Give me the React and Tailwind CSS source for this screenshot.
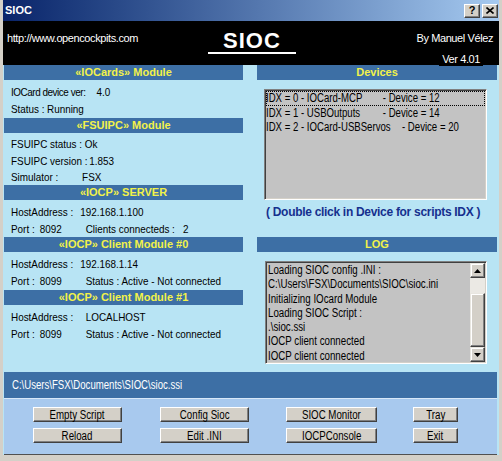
import React from "react";

function Header({ children }) {
  return (
    <div className="h-[15px] bg-[#3d6fa5] flex items-center justify-center text-[11px] font-bold text-[#f2f24a] leading-none">
      {children}
    </div>
  );
}

function Row({ label, lw, value, ew, extra }) {
  return (
    <div className="flex whitespace-nowrap origin-left scale-x-[0.9]">
      <span className={"shrink-0 " + (lw || "")}>{label}</span>
      <span className={"shrink-0 " + (ew || "")}>{value}</span>
      {extra ? <span className="shrink-0">{extra}</span> : null}
    </div>
  );
}

function WinBtn({ className, children }) {
  return (
    <div
      className={
        "h-[15px] bg-[#d4d0c8] border border-t-white border-l-white border-r-[#404040] border-b-[#404040] shadow-[inset_-1px_-1px_0_#808080] flex items-center justify-center text-[12px] leading-none text-black whitespace-nowrap " +
        className
      }
    >
      <span className="inline-block scale-x-[0.81]">{children}</span>
    </div>
  );
}

function Arrow({ up }) {
  return (
    <div className="h-[15px] w-[15px] shrink-0 bg-[#d4d0c8] border border-t-[#e8e6e0] border-l-[#e8e6e0] border-r-[#404040] border-b-[#404040] shadow-[inset_-1px_-1px_0_#808080,inset_1px_1px_0_#ffffff] flex items-center justify-center">
      <svg width="7" height="4" viewBox="0 0 7 4">
        {up ? <polygon points="3.5,0 7,4 0,4" fill="#000" /> : <polygon points="0,0 7,0 3.5,4" fill="#000" />}
      </svg>
    </div>
  );
}

function Line({ children }) {
  return <div className="origin-left scale-x-[0.81] whitespace-nowrap">{children}</div>;
}

export default function App() {
  return (
    <div className="w-[502px] h-[461px] bg-[#d4d0c8] px-[3px] flex flex-col font-['Liberation_Sans',Arial,sans-serif] overflow-hidden">
      {/* Title bar */}
      <div className="h-[21px] shrink-0 flex items-center justify-between pl-[2px] pr-[1px] bg-linear-to-r from-[#0a246a] to-[#a6caf0]">
        <span className="text-white font-bold text-[11px] leading-none">SIOC</span>
        <div className="flex gap-[2px]">
          <div className="w-[16px] h-[14px] bg-[#d4d0c8] border border-t-white border-l-white border-r-[#404040] border-b-[#404040] shadow-[inset_-1px_-1px_0_#808080] flex items-center justify-center text-[11px] font-bold leading-none text-black">
            ?
          </div>
          <div className="w-[16px] h-[14px] bg-[#d4d0c8] border border-t-white border-l-white border-r-[#404040] border-b-[#404040] shadow-[inset_-1px_-1px_0_#808080] flex items-center justify-center">
            <svg width="8" height="7" viewBox="0 0 8 7">
              <path d="M0.5 0.5 L7.5 6.5 M7.5 0.5 L0.5 6.5" stroke="#000" strokeWidth="1.6" />
            </svg>
          </div>
        </div>
      </div>

      {/* Black header */}
      <div className="h-[44px] shrink-0 bg-black flex items-start text-white">
        <div className="w-[205px] pl-[4px] pt-[10px] text-[11px] leading-[14px] tracking-[-0.4px] whitespace-nowrap">
          http://www.opencockpits.com
        </div>
        <div className="pt-[9px]">
          <span className="inline-block px-[15px] border-b-2 border-white text-[22px] font-bold leading-[22px] tracking-[1px]">
            SIOC
          </span>
        </div>
        <div className="ml-auto pr-[6px] pt-[10px] flex flex-col items-end text-[11px] leading-[14px] tracking-[-0.4px] whitespace-nowrap">
          <span>By Manuel Vélez</span>
          <span className="relative z-10 mt-[7px] mr-[10px] bg-black px-[3px]">Ver 4.01</span>
        </div>
      </div>

      {/* Main area */}
      <div className="h-[390px] shrink-0 bg-[#b8e4f4] flex flex-col">
        <div className="h-[307px] shrink-0 flex">
          {/* Left column */}
          <div className="ml-[1px] w-[239px] flex flex-col text-[11px] text-black">
            <Header>«IOCards» Module</Header>
            <div className="h-[38px] pt-[4px] pl-[7px] leading-[16.5px]">
              <Row label="IOCard device ver:" lw="w-[95px] tracking-[-0.5px]" value="4.0" />
              <Row label="Status :" lw="w-[40px]" value="Running" />
            </div>
            <Header>«FSUIPC» Module</Header>
            <div className="h-[52px] pt-[3px] pl-[7px] leading-[16.5px]">
              <Row label="FSUIPC status :" lw="w-[82px]" value="Ok" />
              <Row label="FSUIPC version :" lw="w-[87px]" value="1.853" />
              <Row label="Simulator :" lw="w-[79px]" value="FSX" />
            </div>
            <Header>«IOCP» SERVER</Header>
            <div className="h-[37px] pt-[4px] pl-[7px] leading-[16.5px]">
              <Row label="HostAddress :" lw="w-[77px]" value="192.168.1.100" />
              <Row
                label="Port :"
                lw="w-[32px]"
                value="8092"
                ew="w-[51px]"
                extra={
                  <span className="flex">
                    <span className="w-[108px]">Clients connecteds :</span>
                    <span>2</span>
                  </span>
                }
              />
            </div>
            <Header>«IOCP» Client Module #0</Header>
            <div className="h-[38px] pt-[4px] pl-[7px] leading-[16.5px]">
              <Row label="HostAddress :" lw="w-[77px]" value="192.168.1.14" />
              <Row label="Port :" lw="w-[32px]" value="8099" ew="w-[51px]" extra="Status : Active - Not connected" />
            </div>
            <Header>«IOCP» Client Module #1</Header>
            <div className="pt-[4px] pl-[7px] leading-[16.5px]">
              <Row label="HostAddress :" lw="w-[83px]" value="LOCALHOST" />
              <Row label="Port :" lw="w-[32px]" value="8099" ew="w-[51px]" extra="Status : Active - Not connected" />
            </div>
          </div>

          {/* Right column */}
          <div className="ml-[14px] w-[240px] flex flex-col">
            <Header>Devices</Header>
            <div className="mt-[9px] ml-[7px] w-[223px] h-[111px] bg-[#c3c3c3] border border-t-[#808080] border-l-[#808080] border-b-white border-r-white shadow-[inset_1px_1px_0_#404040,inset_-1px_-1px_0_#d4d0c8] pt-[1px] px-[1px] text-[12px] leading-[14.5px] text-black whitespace-nowrap">
              <div className="outline-1 outline-dotted outline-black -outline-offset-1">
                <div className="flex origin-left scale-x-[0.8]">
                  <span className="w-[146px] shrink-0">IDX = 0 - IOCard-MCP</span>
                  <span>- Device = 12</span>
                </div>
              </div>
              <div>
                <div className="flex origin-left scale-x-[0.8]">
                  <span className="w-[146px] shrink-0">IDX = 1 - USBOutputs</span>
                  <span>- Device = 14</span>
                </div>
              </div>
              <div>
                <div className="flex origin-left scale-x-[0.8]">
                  <span className="w-[170px] shrink-0">IDX = 2 - IOCard-USBServos</span>
                  <span>- Device = 20</span>
                </div>
              </div>
            </div>
            <div className="mt-[4px] pl-[9px] text-[12px] leading-[16px] font-bold tracking-[-0.3px] text-[#16308e] whitespace-nowrap">
              ( Double click in Device for scripts IDX )
            </div>
            <div className="mt-[17px]">
              <Header>LOG</Header>
            </div>
            <div className="mt-[9px] ml-[8px] w-[222px] h-[103px] bg-[#c3c3c3] border border-t-[#808080] border-l-[#808080] border-b-white border-r-white shadow-[inset_1px_1px_0_#404040,inset_-1px_-1px_0_#d4d0c8] flex p-[1px]">
              <div className="flex-1 pl-[1px] text-[12px] leading-[14.3px] text-black overflow-hidden">
                <Line>Loading SIOC config .INI :</Line>
                <Line>{"C:\\Users\\FSX\\Documents\\SIOC\\sioc.ini"}</Line>
                <Line>Initializing IOcard Module</Line>
                <Line>Loading SIOC Script :</Line>
                <Line>{".\\sioc.ssi"}</Line>
                <Line>IOCP client connected</Line>
                <Line>IOCP client connected</Line>
              </div>
              <div className="w-[15px] flex flex-col">
                <Arrow up />
                <div className="h-[15px] shrink-0 bg-[#ebe9e4]" />
                <div className="flex-1 bg-[#d4d0c8] border border-t-[#e8e6e0] border-l-[#e8e6e0] border-r-[#404040] border-b-[#404040] shadow-[inset_-1px_-1px_0_#808080,inset_1px_1px_0_#ffffff]" />
                <Arrow />
              </div>
            </div>
          </div>
        </div>

        {/* Path bar */}
        <div className="ml-[1px] w-[493px] h-[26px] shrink-0 bg-[#3d6fa5] flex items-center pl-[8px] text-[12px] text-white whitespace-nowrap">
          <span className="inline-block origin-left scale-x-[0.8]">{"C:\\Users\\FSX\\Documents\\SIOC\\sioc.ssi"}</span>
        </div>

        {/* Buttons */}
        <div className="ml-[1px] w-[493px] h-[57px] shrink-0 bg-[#a8c9ee] border-t border-t-[#d8e8f8] border-b border-b-[#505050] flex flex-col gap-[6px] pt-[8px]">
          <div className="flex">
            <WinBtn className="ml-[29px] w-[89px]">Empty Script</WinBtn>
            <WinBtn className="ml-[38px] w-[89px]">Config Sioc</WinBtn>
            <WinBtn className="ml-[37px] w-[91px]">SIOC Monitor</WinBtn>
            <WinBtn className="ml-[36px] w-[45px]">Tray</WinBtn>
          </div>
          <div className="flex">
            <WinBtn className="ml-[29px] w-[89px]">Reload</WinBtn>
            <WinBtn className="ml-[38px] w-[89px]">Edit .INI</WinBtn>
            <WinBtn className="ml-[37px] w-[91px]">IOCPConsole</WinBtn>
            <WinBtn className="ml-[36px] w-[45px]">Exit</WinBtn>
          </div>
        </div>
      </div>
    </div>
  );
}
